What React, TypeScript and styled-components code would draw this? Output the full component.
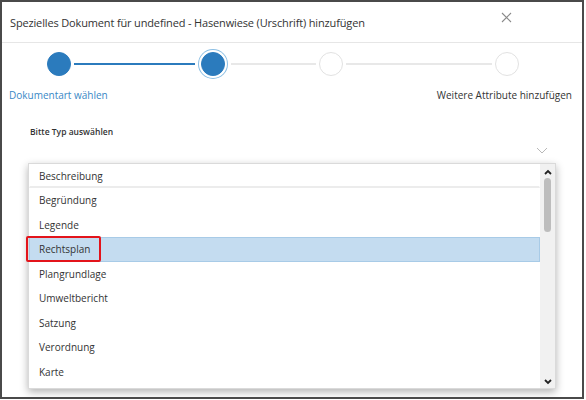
import styled, { createGlobalStyle } from "styled-components";

const GlobalStyle = createGlobalStyle`
  body {
    margin: 0;
    background: #ffffff;
    font-family: "Open Sans", "Liberation Sans", sans-serif;
  }
`;

const Frame = styled.div`
  box-sizing: border-box;
  width: 584px;
  height: 399px;
  border: 2px solid #4a4a4a;
  background: #ffffff;
  overflow: hidden;
`;

const Header = styled.div`
  display: flex;
  justify-content: space-between;
  align-items: center;
  height: 40px;
  padding: 0 70px 0 8px;
  border-bottom: 1px solid #e6e6e6;
  color: #333;
  font-size: 11px;
  letter-spacing: -0.15px;
`;

const Close = styled.button`
  border: none;
  background: none;
  padding: 0;
  display: flex;
  color: #8a8a8a;
  margin-top: -10px;
`;

const Stepper = styled.div`
  display: flex;
  align-items: center;
  gap: 3px;
  padding: 8px 0 0 45px;
  height: 26px;
`;

const Dot = styled.div<{ state: "done" | "active" | "todo" }>`
  box-sizing: border-box;
  width: 24px;
  height: 24px;
  border-radius: 50%;
  flex: none;
  background: ${({ state }) => (state === "todo" ? "#ffffff" : "#2b7bbd")};
  border: 1px solid ${({ state }) => (state === "todo" ? "#e2e2e2" : "#2b7bbd")};
  box-shadow: ${({ state }) =>
    state === "active" ? "0 0 0 2px #ffffff, 0 0 0 3px #8cbfe4" : "none"};
  margin: ${({ state }) => (state === "active" ? "0 3px" : "0")};
`;

const Line = styled.div<{ width: number; done?: boolean }>`
  width: ${({ width }) => width}px;
  height: 2px;
  background: ${({ done }) => (done ? "#2b7bbd" : "#e8e8e8")};
`;

const Labels = styled.div`
  display: flex;
  justify-content: space-between;
  padding: 11px 10px 0 7px;
  font-size: 10px;
`;

const StepLabel = styled.span<{ active?: boolean }>`
  color: ${({ active }) => (active ? "#3a88c6" : "#333")};
`;

const FieldLabel = styled.div`
  padding: 24px 0 0 28px;
  font-size: 8.5px;
  font-weight: 600;
  color: #333;
`;

const SelectWrap = styled.div`
  position: relative;
  margin: 0 26px 0 26px;
  height: 26px;
  display: flex;
  justify-content: flex-end;
  align-items: center;
  color: #b8b8b8;
`;

const DropList = styled.div`
  position: absolute;
  top: 26px;
  left: 0;
  width: 528px;
  height: 226px;
  box-sizing: border-box;
  background: #ffffff;
  border: 1px solid #dadada;
  box-shadow: 0 3px 8px rgba(0, 0, 0, 0.3);
  display: flex;
`;

const Options = styled.div`
  flex: 1;
  display: flex;
  flex-direction: column;
`;

const Option = styled.div<{ selected?: boolean; first?: boolean }>`
  position: relative;
  box-sizing: border-box;
  height: ${({ first }) => (first ? "24px" : "24.5px")};
  display: flex;
  align-items: center;
  padding-left: 9px;
  font-size: 10px;
  color: #333;
  background: ${({ selected }) => (selected ? "#c4dcf0" : "#ffffff")};
  border: 1px solid ${({ selected }) => (selected ? "#a8cbe7" : "transparent")};
  border-bottom: ${({ first, selected }) =>
    first ? "2px solid #ececec" : selected ? "1px solid #a8cbe7" : "1px solid transparent"};
`;

const Marker = styled.div`
  position: absolute;
  left: -4px;
  top: -2px;
  width: 75px;
  height: 26px;
  box-sizing: border-box;
  border: 2px solid #e3141b;
  border-radius: 2px;
`;

const Scrollbar = styled.div`
  width: 15px;
  background: #f1f1f1;
  display: flex;
  flex-direction: column;
  align-items: center;
  justify-content: space-between;
  padding: 5px 0 3px;
  box-sizing: border-box;
`;

const Thumb = styled.div`
  width: 7px;
  height: 54px;
  border-radius: 4px;
  background: #bdbdbd;
  margin-top: 3px;
`;

const Spacer = styled.div`
  flex: 1;
`;

const Arrow = ({ up }: { up?: boolean }) => (
  <svg width="8" height="6" viewBox="0 0 8 6">
    <path
      d={up ? "M1 5 L4 2 L7 5" : "M1 1 L4 4 L7 1"}
      fill="none"
      stroke="#222"
      strokeWidth="1.8"
    />
  </svg>
);

const items = [
  "Begründung",
  "Legende",
  "Rechtsplan",
  "Plangrundlage",
  "Umweltbericht",
  "Satzung",
  "Verordnung",
  "Karte",
];

export default function App() {
  return (
    <>
      <GlobalStyle />
      <Frame>
        <Header>
          <span>Spezielles Dokument für undefined - Hasenwiese (Urschrift) hinzufügen</span>
          <Close aria-label="close">
            <svg width="11" height="11" viewBox="0 0 11 11">
              <path d="M1 1 L10 10 M10 1 L1 10" stroke="currentColor" strokeWidth="1.1" />
            </svg>
          </Close>
        </Header>

        <Stepper>
          <Dot state="done" />
          <Line width={121} done />
          <Dot state="active" />
          <Line width={85} />
          <Dot state="todo" />
          <Line width={146} />
          <Dot state="todo" />
        </Stepper>

        <Labels>
          <StepLabel active>Dokumentart wählen</StepLabel>
          <StepLabel>Weitere Attribute hinzufügen</StepLabel>
        </Labels>

        <FieldLabel>Bitte Typ auswählen</FieldLabel>

        <SelectWrap>
          <svg width="12" height="7" viewBox="0 0 12 7" style={{ marginRight: 8 }}>
            <path d="M1 1 L6 6 L11 1" fill="none" stroke="currentColor" strokeWidth="1" />
          </svg>
          <DropList>
            <Options>
              <Option first>Beschreibung</Option>
              {items.map((item) => (
                <Option key={item} selected={item === "Rechtsplan"}>
                  {item}
                  {item === "Rechtsplan" && <Marker />}
                </Option>
              ))}
            </Options>
            <Scrollbar>
              <Arrow up />
              <Thumb />
              <Spacer />
              <Arrow />
            </Scrollbar>
          </DropList>
        </SelectWrap>
      </Frame>
    </>
  );
}
